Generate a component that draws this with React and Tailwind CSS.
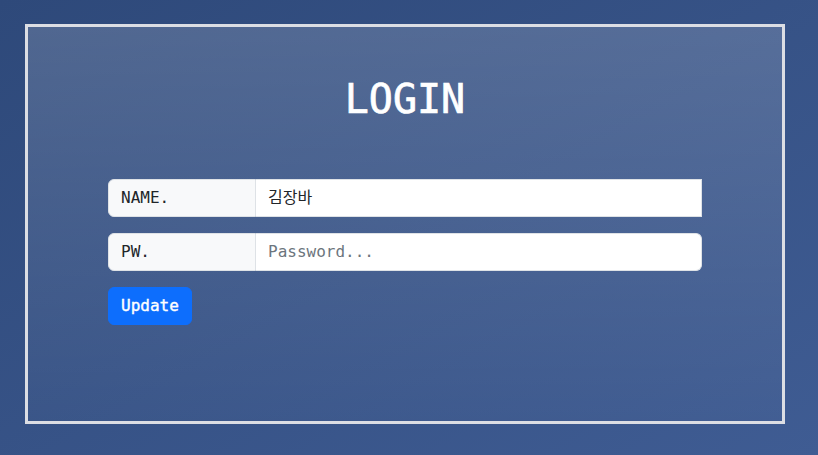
export default function App() {
  const mono = { fontFamily: '"DejaVu Sans Mono", "Noto Sans CJK KR", monospace' };
  return (
    <div
      className="w-full min-h-[455px] bg-gradient-to-br from-[#2e497a] to-[#3f5c93] pt-[24px] pl-[25px]"
      style={mono}
    >
      <div className="w-[760px] h-[400px] border-[3px] border-[#dcdee4] bg-gradient-to-b from-white/[0.16] to-white/[0.02] px-20 pt-[48px]">
        <h1 className="text-center text-white text-[40px] leading-[48px] font-normal [-webkit-text-stroke:0.7px_white]">LOGIN</h1>
        <div className="mt-[56px] flex flex-col gap-4">
          <div className="flex h-[38px]">
            <div className="w-[148px] shrink-0 flex items-center px-3 bg-[#f8f9fa] border border-[#dee2e6] rounded-l-[6px] text-[16px] text-[#212529]">
              NAME.
            </div>
            <div className="flex-1 flex items-center px-3 bg-white border border-l-0 border-[#dee2e6] text-[16px] text-[#212529]">
              김장바
            </div>
          </div>
          <div className="flex h-[38px]">
            <div className="w-[148px] shrink-0 flex items-center px-3 bg-[#f8f9fa] border border-[#dee2e6] rounded-l-[6px] text-[16px] text-[#212529]">
              PW.
            </div>
            <input
              type="password"
              placeholder="Password..."
              className="flex-1 min-w-0 px-3 bg-white border border-l-0 border-[#dee2e6] rounded-r-[6px] text-[16px] text-[#212529] placeholder:text-[#6c757d] outline-none"
              style={mono}
            />
          </div>
          <div>
            <button
              className="h-[38px] px-3 bg-[#0d6efd] border border-[#0d6efd] rounded-[6px] text-white text-[16px] leading-[24px] [-webkit-text-stroke:0.4px_white]"
              style={mono}
            >
              Update
            </button>
          </div>
        </div>
      </div>
    </div>
  );
}
